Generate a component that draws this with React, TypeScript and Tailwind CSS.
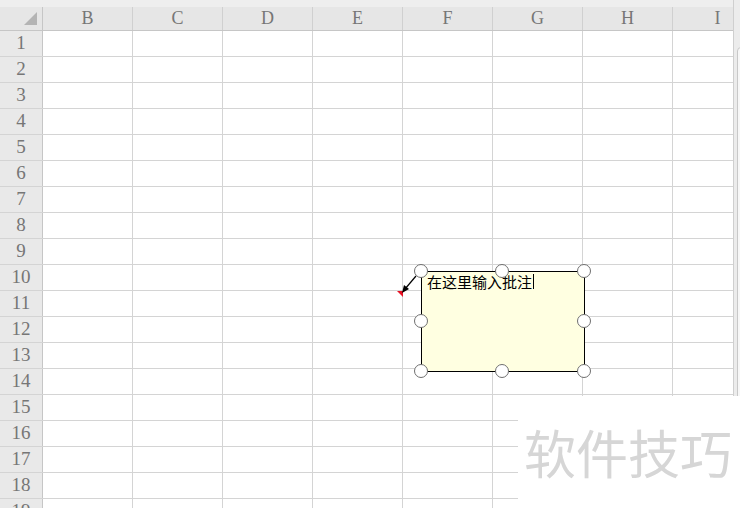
import React from 'react'

const COLS = ['B', 'C', 'D', 'E', 'F', 'G', 'H', 'I']
const ROWS = Array.from({ length: 19 }, (_, i) => i + 1)

function Handle({ className }: { className: string }) {
  return (
    <div
      className={`absolute h-[14px] w-[14px] -translate-x-1/2 -translate-y-1/2 rounded-full border border-[#6f6f6f] bg-white ${className}`}
    />
  )
}

function CommentBox() {
  return (
    <>
      {/* red comment marker in cell corner */}
      <svg className="absolute left-[396px] top-[290px]" width="8" height="8" viewBox="0 0 8 8">
        <polygon points="1,1 7,1 7,7" fill="#e81123" />
      </svg>
      {/* connector arrow */}
      <svg className="absolute left-[398px] top-[270px]" width="24" height="26" viewBox="0 0 24 26">
        <line x1="18" y1="6" x2="7" y2="19" stroke="#000" strokeWidth="1.2" />
        <polygon points="4,23 6,15 11,19" fill="#000" />
      </svg>
      <div className="absolute left-[421px] top-[271px] h-[101px] w-[164px] border border-black bg-[#ffffe1]">
        <div className="flex items-center pl-[5px] text-[15px] leading-[19px] text-black [font-family:'Noto_Sans_CJK_SC',sans-serif]">
          <span>在这里输入批注</span>
          <span className="ml-px inline-block h-[15px] w-px bg-black" />
        </div>
      </div>
      <Handle className="left-[421px] top-[271px]" />
      <Handle className="left-[502px] top-[271px]" />
      <Handle className="left-[584px] top-[271px]" />
      <Handle className="left-[421px] top-[321px]" />
      <Handle className="left-[584px] top-[321px]" />
      <Handle className="left-[421px] top-[371px]" />
      <Handle className="left-[502px] top-[371px]" />
      <Handle className="left-[584px] top-[371px]" />
    </>
  )
}

export default function App() {
  return (
    <div className="relative flex h-[508px] w-[740px] overflow-hidden bg-white [font-family:'Liberation_Serif',serif]">
      <div className="w-[733px] shrink-0 overflow-hidden">
        {/* header */}
        <div className="h-[7px] bg-[#eeeeee]" />
        <div className="flex h-[24px] border-b border-[#c6c6c6] bg-[#e6e6e6]">
          <div className="relative w-[43px] shrink-0 border-r border-[#c6c6c6]">
            <svg className="absolute left-[24px] top-[5px]" width="14" height="14" viewBox="0 0 14 14">
              <polygon points="0,13 13,13 13,0" fill="#b4b4b4" />
            </svg>
          </div>
          {COLS.map((c) => (
            <div
              key={c}
              className="flex w-[90px] shrink-0 items-center justify-center border-r border-[#d0d0d0] text-[18px] text-[#767676]"
            >
              {c}
            </div>
          ))}
        </div>
        {/* rows */}
        {ROWS.map((r) => (
          <div key={r} className="flex h-[26px] border-b border-[#d4d4d4]">
            <div className="flex w-[43px] shrink-0 items-center justify-center border-r border-[#c6c6c6] bg-[#e9e9e9] text-[19px] text-[#767676]">
              {r}
            </div>
            {COLS.map((c) => (
              <div key={c} className="w-[90px] shrink-0 border-r border-[#d4d4d4]" />
            ))}
          </div>
        ))}
      </div>
      {/* right edge strip */}
      <div className="relative w-[7px] shrink-0 border-l border-[#cfcfcf] bg-[#ececec]">
        <div className="absolute left-[3px] top-[47px] h-[470px] w-[10px] rounded-tl-[4px] border border-[#c8c8c8] bg-[#f7f7f7]" />
      </div>

      <CommentBox />

      {/* watermark */}
      <div className="absolute left-[518px] top-[396px] flex h-[112px] w-[222px] items-start bg-white pl-[6px] pt-[26px]">
        <span className="text-[52px] leading-[60px] text-[#d6d6d6] [font-family:'Noto_Sans_CJK_SC',sans-serif]">
          软件技巧
        </span>
      </div>
    </div>
  )
}
